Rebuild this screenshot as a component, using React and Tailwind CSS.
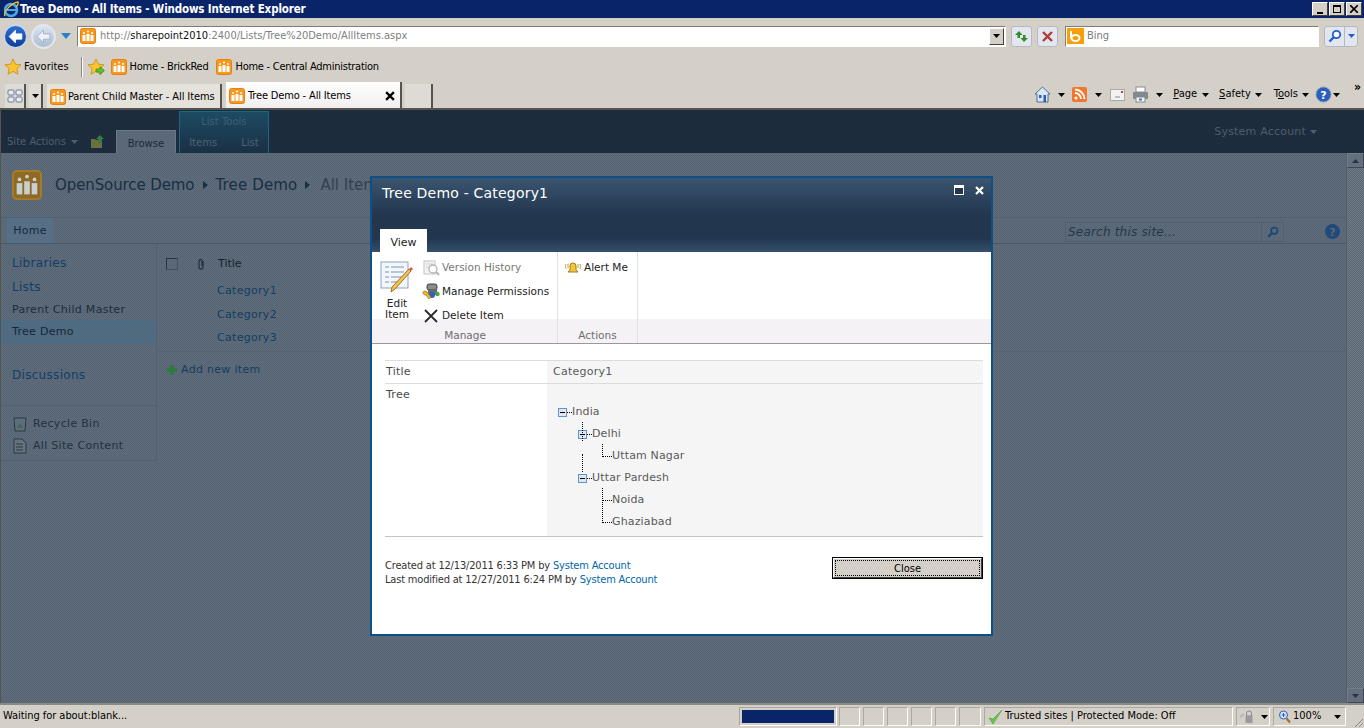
import React from "react";

const Sp = ({ s = 16, dim = false }) => (
  <svg width={s} height={s} viewBox="0 0 16 16" className="shrink-0">
    <rect x="0.5" y="0.5" width="15" height="15" rx="2" fill={dim ? "#8f6a25" : "#f59a1e"} stroke={dim ? "#a67c2c" : "#e87f10"} />
    <g fill={dim ? "#c9cfd0" : "#fff"}>
      <rect x="2.5" y="7" width="3" height="6" />
      <rect x="6.5" y="6" width="3" height="7" />
      <rect x="10.5" y="7" width="3" height="6" />
      <circle cx="4" cy="5" r="1" />
      <circle cx="8" cy="3.5" r="1" />
      <circle cx="12" cy="5" r="1" />
    </g>
  </svg>
);

const Caret = ({ c = "#000", className = "" }) => (
  <svg width="7" height="4" viewBox="0 0 7 4" className={"shrink-0 " + className}><path d="M0 0h7L3.500 4z" fill={c} /></svg>
);

const RightTri = ({ c, className = "" }) => (
  <svg width="5" height="8" viewBox="0 0 5 8" className={"shrink-0 " + className}><path d="M0 0l5 4-5 4z" fill={c} /></svg>
);

const Star = ({ green = false }) => (
  <svg width="18" height="18" viewBox="0 0 18 18" className="shrink-0">
    <path d="M9 1l2.400 5.200 5.600.6-4.200 3.800 1.200 5.600L9 13.400 4 16.200l1.200-5.600L1 6.800l5.600-.6z" fill="#fbc531" stroke="#c98a10" strokeWidth=".8" />
    {green && <path d="M9 11h4V8.500l4.500 4-4.500 4V14H9z" fill="#5fc12f" stroke="#2e8b12" strokeWidth=".7" />}
  </svg>
);

const NavBtn = ({ back }) => (
  <div className={"flex items-center justify-center rounded-full border-2 w-[25px] h-[25px] " + (back ? "border-[#c8d4e8] bg-gradient-to-b from-[#2f6fd0] to-[#0f3f98]" : "border-[#e2e6ee] bg-gradient-to-b from-[#dce4f0] to-[#aebcd2]")}>
    <svg width="17" height="15" viewBox="0 0 16 14"><path d="M8 1L2 7l6 6V9.500h6v-5H8z" fill={back ? "#fff" : "#eef2f8"} stroke={back ? "#fff" : "#8ea2c0"} strokeWidth=".7" /></svg>
  </div>
);

const SmallBtn = ({ children }) => (
  <div className="w-[21px] h-[21px] rounded-[3px] border border-[#b4b9c4] bg-[#e3e6ee] flex items-center justify-center">{children}</div>
);

const StatusCell = ({ className = "", children }) => (
  <div className={"h-[19px] border border-[#aaa8a0] border-b-white border-r-white flex items-center shrink-0 " + className}>{children}</div>
);

const Minus = () => (
  <span className="w-[9px] h-[9px] border border-[#5a96d0] bg-[#dfe6ee] flex items-center justify-center shrink-0">
    <span className="w-[5px] h-px bg-black" />
  </span>
);

const DotH = ({ w }) => <span className="border-t border-dotted border-black shrink-0" style={{ width: w }} />;

const V = ({ className }) => <span className={"absolute border-l border-dotted border-black " + className} />;

const TreeLabel = ({ children }) => <span className="text-[#5a5a5a] tracking-[0.15px]">{children}</span>;

const Win = ({ children }) => (
  <div className="w-[16px] h-[14px] bg-[#d4d0c8] border border-[#fff] border-r-[#404040] border-b-[#404040] flex items-center justify-center text-black">{children}</div>
);

export default function App() {
  return (
    <div className="w-[1364px] h-[728px] overflow-hidden bg-[#d4d0c8] relative flex flex-col font-['DejaVu_Sans_Condensed','DejaVu_Sans',sans-serif] text-[11px]">
      {/* title bar */}
      <div className="h-[18px] bg-[#0a246a] flex items-center pl-[3px] pr-[2px] shrink-0">
        <svg width="17" height="17" viewBox="0 0 17 17" className="shrink-0">
          <circle cx="8" cy="9" r="6" fill="none" stroke="#4aa8e8" strokeWidth="2.500" />
          <path d="M3 9h11" stroke="#4aa8e8" strokeWidth="2" />
          <path d="M2 15C0 11 8 2 15 1c1 2-1 4-2 5" fill="none" stroke="#f2c230" strokeWidth="1.300" />
        </svg>
        <span className="pt-px text-white font-bold text-[11.500px] tracking-[-0.15px]">Tree Demo - All Items - Windows Internet Explorer</span>
        <div className="ml-auto flex gap-px">
          <Win><span className="w-[6px] h-[2px] bg-black self-end mb-px" /></Win>
          <Win><span className="w-[8px] h-[8px] border border-black border-t-2" /></Win>
          <Win><svg width="8" height="8" viewBox="0 0 8 8"><path d="M0 0l8 8M8 0L0 8" stroke="#000" strokeWidth="1.600" /></svg></Win>
        </div>
      </div>

      {/* address bar */}
      <div className="h-[36px] flex items-center shrink-0 pl-[3px]">
        <NavBtn back />
        <div className="ml-[3px]"><NavBtn /></div>
        <svg width="10" height="6" viewBox="0 0 10 6" className="ml-[5px] mr-[6px] shrink-0"><path d="M0 0h10L5 6z" fill="#2a7fd0" /></svg>
        <div className="w-[929px] h-[21px] bg-white border border-[#7f7d76] border-r-white border-b-white flex items-center pl-[2px] shrink-0">
          <Sp />
          <span className="ml-[4px] text-[#808080] text-[11px]">http://<span className="text-[#111]">sharepoint2010</span>:2400/Lists/Tree%20Demo/AllItems.aspx</span>
          <div className="ml-auto w-[15px] h-[17px] bg-[#d4d0c8] border border-white border-r-[#404040] border-b-[#404040] flex items-center justify-center mr-px"><Caret /></div>
        </div>
        <div className="ml-[5px]"><SmallBtn><svg width="15" height="13" viewBox="0 0 15 13"><path d="M5 1L1 5h2.500v3H6V5h2.500zM10 12l4-4h-2.500V5H9v3H6.500z" fill="#2e8b2e" /></svg></SmallBtn></div>
        <div className="ml-[5px]"><SmallBtn><svg width="13" height="13" viewBox="0 0 13 13"><path d="M2 2l9 9M11 2l-9 9" stroke="#b03a3a" strokeWidth="2.400" /></svg></SmallBtn></div>
        <div className="ml-[7px] w-[254px] h-[21px] bg-white border border-[#7f7d76] border-r-white border-b-white flex items-center pl-px shrink-0">
          <span className="w-[17px] h-[16px] bg-[#f59f0a] flex items-center justify-center shrink-0">
            <svg width="13" height="13" viewBox="0 0 13 13"><path d="M2 1v7.500" stroke="#fff" strokeWidth="2" fill="none" /><ellipse cx="6.500" cy="8" rx="4" ry="3" fill="none" stroke="#fff" strokeWidth="2" /></svg>
          </span>
          <span className="ml-[3px] text-[#7a7a7a] text-[11px]">Bing</span>
        </div>
        <div className="ml-[5px] flex rounded-[3px] border border-[#b4b9c4] h-[21px] bg-[#e3e6ee]">
          <span className="w-[20px] flex items-center justify-center border-r border-[#b4b9c4]">
            <svg width="14" height="14" viewBox="0 0 14 14"><circle cx="8.500" cy="5.500" r="3.700" fill="#fff" stroke="#1f5fd0" strokeWidth="1.800" /><path d="M6 8l-4.500 4.500" stroke="#1f5fd0" strokeWidth="2.400" /></svg>
          </span>
          <span className="w-[12px] flex items-center justify-center"><Caret c="#1f5fd0" /></span>
        </div>
      </div>

      {/* favorites bar */}
      <div className="h-[26px] flex items-center shrink-0 pl-[4px] text-[11px] text-black">
        <Star />
        <span className="ml-[2px]">Favorites</span>
        <span className="ml-[12px] w-[2px] h-[20px] border-l border-[#8a8880] bg-white" />
        <span className="ml-[4px]"><Star green /></span>
        <span className="ml-[6px]"><Sp /></span>
        <span className="ml-[3px] tracking-[-0.25px]">Home - BrickRed</span>
        <span className="ml-[8px]"><Sp /></span>
        <span className="ml-[3px] tracking-[-0.25px]">Home - Central Administration</span>
      </div>

      {/* tab bar */}
      <div className="h-[28px] flex items-end shrink-0 pl-[5px] relative">
        <div className="h-[24px] w-[21px] border-r-2 border-[#55534e] bg-[#dedbd4] flex items-center justify-center">
          <svg width="16" height="14" viewBox="0 0 16 14" fill="#e8ecf4" stroke="#6b7c98"><rect x="1" y="1" width="6" height="5" rx="1" /><rect x="9" y="1" width="6" height="5" rx="1" /><rect x="1" y="8" width="6" height="5" rx="1" /><rect x="9" y="8" width="6" height="5" rx="1" /></svg>
        </div>
        <div className="ml-[3px] h-[24px] w-[14px] border-r-2 border-[#55534e] bg-[#dedbd4] flex items-center justify-center"><Caret /></div>
        <div className="ml-[4px] h-[24px] w-[175px] border-r-2 border-[#55534e] bg-[#e5e2db] flex items-center pl-[3px] pt-[2px] text-black">
          <Sp />
          <span className="ml-[2px] tracking-[-0.1px]">Parent Child Master - All Items</span>
        </div>
        <div className="ml-[4px] h-[26px] w-[176px] bg-gradient-to-b from-[#ffffff] to-[#f1eeee] border-r-2 border-[#55534e] flex items-center pl-[3px] pt-[2px] text-black">
          <Sp />
          <span className="ml-[3px] tracking-[-0.15px]">Tree Demo - All Items</span>
          <svg width="10" height="10" viewBox="0 0 9 9" className="ml-auto mr-[5px]"><path d="M1 1l7 7M8 1L1 8" stroke="#000" strokeWidth="2" /></svg>
        </div>
        <div className="ml-[3px] h-[24px] w-[28px] border-r-2 border-[#55534e] bg-[#dedbd4]" />
        <div className="ml-auto h-[28px] flex items-center pr-[24px] pt-px text-black">
          <svg width="17" height="17" viewBox="0 0 17 17"><path d="M8.500 1L1 8h2v8h11V8h2z" fill="#dbe6f4" stroke="#4c6f9e" /><rect x="5" y="9" width="2.500" height="3" fill="#2f5fa8" /><rect x="9.500" y="9" width="2.500" height="7" fill="#2f5fa8" /></svg>
          <Caret className="ml-[7px]" />
          <svg width="15" height="15" viewBox="0 0 15 15" className="ml-[7px]"><rect width="15" height="15" rx="2" fill="#f0772b" /><circle cx="4" cy="11" r="1.500" fill="#fff" /><path d="M3 6a6 6 0 016 6M3 2.500A9.500 9.500 0 0112.500 12" fill="none" stroke="#fff" strokeWidth="1.800" /></svg>
          <Caret className="ml-[8px]" />
          <svg width="15" height="12" viewBox="0 0 15 12" className="ml-[8px]"><rect x=".5" y=".5" width="14" height="11" fill="#f2f2f2" stroke="#a9a9a9" /><rect x="11" y="2" width="2" height="2" fill="#d33" /><path d="M5 8h5" stroke="#888" /></svg>
          <svg width="17" height="17" viewBox="0 0 17 17" className="ml-[7px]"><rect x="4" y="1" width="9" height="5" fill="#fff" stroke="#8a8a8a" /><rect x="1" y="6" width="15" height="7" rx="1" fill="#808890" /><rect x="4" y="11" width="9" height="5" fill="#f4f4f4" stroke="#8a8a8a" /><rect x="7" y="12.500" width="3" height="2" fill="#3a7fc0" /></svg>
          <Caret className="ml-[7px]" />
          <span className="ml-[10px]"><u>P</u>age</span>
          <Caret className="ml-[5px]" />
          <span className="ml-[10px]"><u>S</u>afety</span>
          <Caret className="ml-[4px]" />
          <span className="ml-[12px]">T<u>o</u>ols</span>
          <Caret className="ml-[4px]" />
          <svg width="17" height="17" viewBox="0 0 17 17" className="ml-[6px]"><circle cx="8.500" cy="8.500" r="7.500" fill="#2a5fc0" stroke="#8a9ab0" /><text x="8.500" y="12.500" fontSize="11" fontWeight="bold" fill="#fff" textAnchor="middle" fontFamily="DejaVu Sans">?</text></svg>
          <Caret className="ml-[1px]" />
        </div>
        <span className="absolute right-[3px] top-[1px] text-[12px] font-bold leading-none text-black">»</span>
      </div>

      {/* page (dimmed) */}
      <div className="flex-1 min-h-0 flex flex-col border-t-2 border-l border-[#55534e] bg-[repeating-conic-gradient(#566473_0%_25%,#5f6c7b_0%_50%)] bg-[length:2px_2px] font-['DejaVu_Sans',sans-serif]">
        {/* SP ribbon */}
        <div className="h-[43px] bg-[repeating-conic-gradient(#19293b_0%_25%,#203040_0%_50%)] bg-[length:2px_2px] flex items-end relative shrink-0">
          <span className="text-[#4f5e6e] text-[10px] ml-[6px] mb-[4px]">Site Actions</span>
          <Caret c="#4f5e6e" className="ml-[5px] mb-[9px]" />
          <svg width="16" height="15" viewBox="0 0 16 15" className="ml-[12px] mb-[4px]"><path d="M1 5h4l1 1h6v8H1z" fill="#6b7040" /><path d="M10 1l4 4h-2v4H8V5H6z" fill="#3d7a3d" /></svg>
          <div className="ml-[10px] w-[60px] h-[23px] bg-[#5a6878] border-t border-x border-[#6b7887] text-center leading-[26px] text-[#1d2a38] text-[10px]">Browse</div>
          <div className="ml-[3px] w-[90px] h-[42px] border-x border-t border-[#1d6680] bg-gradient-to-b from-[#1c4b63] to-[#1a3045] flex flex-col items-center">
            <span className="text-[#3f5f73] text-[10px] mt-[2px]">List Tools</span>
            <div className="mt-[6px] flex gap-[24px] text-[#4f6272] text-[10px]"><span>Items</span><span>List</span></div>
          </div>
          <span className="ml-auto mr-[58px] mb-[13px] text-[#4f5e6e] text-[11px] tracking-[0.2px]">System Account</span>
          <Caret c="#4f5e6e" className="absolute right-[47px] top-[20px]" />
        </div>

        <div className="flex-1 min-h-0 flex">
          <div className="flex-1 min-w-0 flex flex-col">
            {/* site title */}
            <div className="h-[65px] flex items-center shrink-0 pl-[11px] border-b border-[#525f6e]">
              <span className="rounded-[3px] overflow-hidden"><Sp s={30} dim /></span>
              <span className="ml-[13px] text-[15px] text-[#182f44] tracking-[-0.1px]">OpenSource Demo</span>
              <RightTri c="#182f44" className="ml-[9px]" />
              <span className="ml-[7px] text-[15px] text-[#182f44] tracking-[0.15px]">Tree Demo</span>
              <RightTri c="#182f44" className="ml-[8px]" />
              <span className="ml-[10px] text-[15px] text-[#33414f]">All Items</span>
            </div>

            {/* top nav */}
            <div className="h-[26px] flex items-stretch shrink-0 pl-[6px] border-b border-[#4c5866] relative">
              <div className="w-[46px] border border-[#4d7390] bg-[#566f85] text-[#16293b] text-[11px] pt-[2px] flex items-center justify-center tracking-[0.3px]">Home</div>
              <div className="ml-auto flex items-center pr-[6px] pt-[2px]">
                <div className="w-[197px] h-[20px] border border-[#525f6e] flex items-center pl-[2px] text-[#24384c] text-[12px] italic tracking-[0.2px]">Search this site...</div>
                <div className="w-[22px] h-[20px] border border-l-0 border-[#525f6e] flex items-center justify-center">
                  <svg width="12" height="12" viewBox="0 0 14 14"><circle cx="8.500" cy="5.500" r="3.700" fill="none" stroke="#184a78" strokeWidth="2" /><path d="M6 8l-4.500 4.500" stroke="#184a78" strokeWidth="2.600" /></svg>
                </div>
                <svg width="15" height="15" viewBox="0 0 15 15" className="ml-[41px]"><circle cx="7.500" cy="7.500" r="7.500" fill="#204a7c" /><text x="7.500" y="11.500" fontSize="11" fontWeight="bold" fill="#5a6878" textAnchor="middle" fontFamily="DejaVu Sans">?</text></svg>
              </div>
            </div>

            {/* body */}
            <div className="flex-1 min-h-0 flex items-start">
              <div className="w-[156px] h-[217px] border-r border-b border-[#525f6e] shrink-0 text-[#1e2c3a]">
                <div className="h-[11px]" />
                <div className="pl-[11px] text-[12px] text-[#123f66] leading-[16px] tracking-[0.3px]">Libraries</div>
                <div className="pl-[11px] mt-[8px] text-[12px] text-[#123f66] leading-[16px] tracking-[0.3px]">Lists</div>
                <div className="pl-[11px] mt-[7px] text-[11px] leading-[16px] tracking-[0.3px]">Parent Child Master</div>
                <div className="mt-[3px] h-[22px] flex items-center pl-[10px] border border-[#456f92] bg-[#506a80] text-[11px] tracking-[0.3px] text-[#14283a]">Tree Demo</div>
                <div className="pl-[11px] mt-[24px] text-[12px] text-[#123f66] leading-[16px] tracking-[0.3px]">Discussions</div>
                <div className="mt-[22px] border-t border-[#525f6e] pl-[12px] pt-[10px] flex flex-col gap-[6px] text-[11px] tracking-[0.3px] text-[#25323f]">
                  <div className="flex items-center h-[16px]">
                    <svg width="14" height="16" viewBox="0 0 14 16"><path d="M1 2h12l-1 13H2z" fill="#5f6d7c" stroke="#2b3947" /><path d="M7 7l3 5H4z" fill="#3d6a4a" /></svg>
                    <span className="ml-[6px]">Recycle Bin</span>
                  </div>
                  <div className="flex items-center h-[16px]">
                    <svg width="14" height="16" viewBox="0 0 14 16"><path d="M1 1h8l4 4v10H1z" fill="#66737f" stroke="#2b3947" /><path d="M3 6h7M3 9h7M3 12h7" stroke="#2b3947" /></svg>
                    <span className="ml-[6px]">All Site Content</span>
                  </div>
                </div>
              </div>
              <div className="flex-1">
                <div className="h-[108px] pl-[9px] border-b border-[#566372]">
                  <div className="h-[40px] flex items-center">
                    <span className="w-[12px] h-[12px] border border-[#2a3644] border-b-[#44515f] border-r-[#44515f]" />
                    <svg width="10" height="12" viewBox="0 0 10 12" className="ml-[18px]"><path d="M7 3v6a2 2 0 01-4 0V3a1.500 1.500 0 013 0v5" fill="none" stroke="#26333f" strokeWidth="1.300" /></svg>
                    <span className="ml-[12px] text-[#16232f] text-[11px]">Title</span>
                  </div>
                  <div className="pl-[51px] -mt-[5px] text-[11px] text-[#133e62] tracking-[0.3px]">
                    <div className="h-[24px] flex items-center">Category1</div>
                    <div className="h-[24px] flex items-center">Category2</div>
                    <div className="h-[23px] flex items-center">Category3</div>
                  </div>
                </div>
                <div className="pl-[10px] mt-[10px] flex items-center text-[#133e62] text-[11px] tracking-[0.3px]">
                  <svg width="10" height="10" viewBox="0 0 10 10"><path d="M3 0h4v3h3v4H7v3H3V7H0V3h3z" fill="#2f7a3e" /></svg>
                  <span className="ml-[4px]">Add new item</span>
                </div>
              </div>
            </div>
          </div>
          {/* scrollbar */}
          <div className="w-[18px] bg-[repeating-conic-gradient(#5b6673_0%_25%,#707c88_0%_50%)] bg-[length:2px_2px] flex flex-col border-l border-[#525f6e]">
            <div className="h-[15px] bg-[#636f7c] border border-[#727e8a] border-r-[#3d4753] border-b-[#3d4753] flex items-center justify-center">
              <Caret c="#2a3440" className="rotate-180" />
            </div>
            <div className="mt-auto w-full h-[15px] bg-[#636f7c] border border-[#727e8a] border-r-[#3d4753] border-b-[#3d4753] flex items-center justify-center">
              <Caret c="#2a3440" />
            </div>
          </div>
        </div>
      </div>

      {/* status bar */}
      <div className="h-[25px] shrink-0 flex items-center border-t-2 border-[#8c8a84] bg-[#d4d0c8] pl-[3px] text-[11px] text-black relative">
        <span className="w-[736px] shrink-0 tracking-[-0.05px]">Waiting for about:blank...</span>
        <StatusCell className="w-[98px] p-[2px]"><span className="w-full h-full bg-[#0a246a]" /></StatusCell>
        <StatusCell className="w-[21px] ml-[2px]" />
        <StatusCell className="w-[21px] ml-[3px]" />
        <StatusCell className="w-[21px] ml-[3px]" />
        <StatusCell className="w-[21px] ml-[3px]" />
        <StatusCell className="w-[21px] ml-[3px]" />
        <StatusCell className="w-[22px] ml-[3px]" />
        <StatusCell className="w-[249px] ml-[3px] pl-[1px]">
          <svg width="18" height="16" viewBox="0 0 16 16"><path d="M2 9l4 6L15 1 6 10z" fill="#62c94a" stroke="#3b9a2a" strokeWidth=".5" /></svg>
          <span className="ml-[1px] whitespace-nowrap">Trusted sites | Protected Mode: Off</span>
        </StatusCell>
        <StatusCell className="w-[34px] ml-[3px] pl-[2px]">
          <svg width="16" height="14" viewBox="0 0 16 14"><path d="M1 7l4-3" stroke="#b4b4b4" strokeWidth="2" /><path d="M10 1a2.500 2.500 0 012.500 2.500V6h-5V3.500A2.500 2.500 0 0110 1z" fill="none" stroke="#888" /><rect x="6.500" y="6" width="7" height="7" fill="#9a9a9a" /></svg>
          <Caret className="ml-[6px]" />
        </StatusCell>
        <StatusCell className="w-[73px] ml-[3px] pl-[4px]">
          <svg width="13" height="14" viewBox="0 0 13 14"><circle cx="5.500" cy="5" r="4" fill="#d8e6f8" stroke="#2a5fc0" /><path d="M3.500 5h4M5.500 3v4" stroke="#2a5fc0" /><path d="M8.500 8.500l3.500 4" stroke="#a56a2a" strokeWidth="2" /></svg>
          <span className="ml-[2px]">100%</span>
          <Caret className="ml-auto mr-[4px]" />
        </StatusCell>
        <svg width="12" height="12" viewBox="0 0 12 12" className="absolute right-0 bottom-0"><path d="M11 3l-8 8M11 7l-4 4" stroke="#8a8880" /></svg>
      </div>

      {/* modal */}
      <div className="absolute left-[370px] top-[176px] w-[623px] h-[460px] border-2 border-[#0f4f86] bg-white flex flex-col font-['DejaVu_Sans',sans-serif]">
        <div className="h-[74px] shrink-0 bg-gradient-to-b from-[#3b5570] via-[#22364e] to-[#22364e] relative">
          <div className="absolute bottom-0 inset-x-0 h-[14px] bg-gradient-to-b from-[#22364e] to-[#34506b]" />
          <span className="absolute left-[10px] top-[5px] text-white text-[14px] tracking-[0.2px]">Tree Demo - Category1</span>
          <span className="absolute left-[582px] top-[7px] w-[10px] h-[10px] border border-white border-t-[3px] bg-[#22364e]" />
          <svg width="9" height="9" viewBox="0 0 9 9" className="absolute left-[603px] top-[8px]"><path d="M1 1l7 7M8 1L1 8" stroke="#fff" strokeWidth="2.200" /></svg>
          <div className="absolute left-[8px] bottom-0 w-[47px] h-[23px] pt-[5px] bg-white text-[#222] text-[11px] flex items-center justify-center">View</div>
        </div>
        <div className="h-[92px] shrink-0 border-b border-[#9a9a9a] flex relative bg-gradient-to-b from-white from-74% to-[#f4f2f5] to-74%">
          <div className="w-[186px] border-r border-[#dfe2e6] relative">
            <div className="absolute left-[0px] top-[9px] w-[50px] flex flex-col items-center text-[#222] text-[10.500px] leading-[10px]">
              <svg width="34" height="32" viewBox="0 0 34 32" className="mb-[5px]">
                <rect x="1" y="1" width="27" height="26" fill="#f3f6fb" stroke="#8aa3c6" />
                <path d="M5 6h4M11 6h13M5 11h4M11 11h13M5 16h4M11 16h13M5 21h4M11 21h9" stroke="#7a94b8" />
                <path d="M31 10L15 28l-4 3 1-5L29 8z" fill="#f3c44a" stroke="#a3701f" />
                <path d="M29 8l2 2 2-2-2-2z" fill="#d85a5a" />
              </svg>
              <span>Edit</span>
              <span className="mt-px">Item</span>
            </div>
            <div className="absolute left-[50px] top-[4px] text-[10.500px] text-[#222]">
              <div className="h-[24px] flex items-center text-[#777]">
                <svg width="18" height="18" viewBox="0 0 18 18"><rect x="2" y="2" width="11" height="13" fill="#f2f2f2" stroke="#c4c4c4" /><path d="M4 5h7M4 8h4" stroke="#d0d0d0" /><circle cx="11" cy="10" r="4" fill="#fff" stroke="#b4b4b4" strokeWidth="1.300" /><path d="M14 13l3 3" stroke="#b4b4b4" strokeWidth="2" /></svg>
                <span className="ml-[2px]">Version History</span>
              </div>
              <div className="h-[24px] flex items-center">
                <svg width="18" height="18" viewBox="0 0 18 18"><rect x="5" y="1" width="10" height="6" rx="2" fill="#8a8a8a" stroke="#444" /><rect x="6" y="7" width="9" height="5" fill="#6a6a6a" /><circle cx="10" cy="12" r="3" fill="#2a62c4" /><path d="M1 9a2.500 2.500 0 014 0l4 5-2 2-3-4a2.500 2.500 0 01-3-3z" fill="#e8b52c" stroke="#8a6a10" strokeWidth=".6" /><circle cx="15.500" cy="11" r="2.200" fill="#4aa84a" /></svg>
                <span className="ml-[2px]">Manage Permissions</span>
              </div>
              <div className="h-[24px] flex items-center">
                <svg width="18" height="18" viewBox="0 0 18 18"><path d="M3 3l12 12M15 3L3 15" stroke="#2b2b2b" strokeWidth="1.800" /></svg>
                <span className="ml-[2px]">Delete Item</span>
              </div>
            </div>
            <span className="absolute left-[0px] w-full text-center bottom-[1px] text-[#6e6e6e] text-[10.500px] leading-[13px] pl-[1px]">Manage</span>
          </div>
          <div className="w-[80px] border-r border-[#dfe2e6] relative text-[10.500px]">
            <div className="h-[24px] mt-[4px] flex items-center pl-[7px] text-[#222]">
              <svg width="16" height="14" viewBox="0 0 16 14"><path d="M8 2a3 3 0 013 3v4l2 2H3l2-2V5a3 3 0 013-3z" fill="#f2c53d" stroke="#a37a1a" /><path d="M1 3c-.7 2-.7 3 0 5M15 3c.7 2 .7 3 0 5M3 3v4M13 3v4" stroke="#c49a2a" fill="none" /></svg>
              <span className="ml-[3px]">Alert Me</span>
            </div>
            <span className="absolute w-full text-center bottom-[1px] leading-[13px] text-[#6e6e6e]">Actions</span>
          </div>
        </div>
        <div className="flex-1 pl-[13px] pr-[8px] text-[11px] text-[#4a4a4a] tracking-[0.25px]">
          <div className="mt-[16px] border-t border-[#dcdcdc] flex h-[24px] border-b">
            <div className="w-[162px] pt-[3px] pl-px">Title</div>
            <div className="flex-1 bg-[#f5f5f5] pt-[3px] pl-[6px] text-[#5a5a5a]">Category1</div>
          </div>
          <div className="flex h-[153px] border-b border-[#c4c4c4]">
            <div className="w-[162px] pt-[3px] pl-px">Tree</div>
            <div className="flex-1 bg-[#f5f5f5] relative pt-[17px] pl-[11px] text-[11px] leading-[22px]">
              <div className="flex items-center h-[22px]"><Minus /><DotH w="5px" /><TreeLabel>India</TreeLabel></div>
              <div className="flex items-center h-[22px] pl-[20px]"><Minus /><DotH w="5px" /><TreeLabel>Delhi</TreeLabel></div>
              <div className="flex items-center h-[22px] pl-[44px]"><DotH w="10px" /><TreeLabel>Uttam Nagar</TreeLabel></div>
              <div className="flex items-center h-[22px] pl-[20px]"><Minus /><DotH w="5px" /><TreeLabel>Uttar Pardesh</TreeLabel></div>
              <div className="flex items-center h-[22px] pl-[44px]"><DotH w="10px" /><TreeLabel>Noida</TreeLabel></div>
              <div className="flex items-center h-[22px] pl-[44px]"><DotH w="10px" /><TreeLabel>Ghaziabad</TreeLabel></div>
              <V className="left-[35px] top-[38px] h-[19px]" />
              <V className="left-[35px] top-[70px] h-[18px]" />
              <V className="left-[55px] top-[60px] h-[11px]" />
              <V className="left-[55px] top-[104px] h-[33px]" />
            </div>
          </div>
          <div className="mt-[22px] flex font-['DejaVu_Sans_Condensed','DejaVu_Sans',sans-serif] text-[#333] tracking-normal leading-[14px]">
            <div className="tracking-[-0.18px]">
              <div>Created at 12/13/2011 6:33 PM by <span className="text-[#0066a8]">System Account</span></div>
              <div>Last modified at 12/27/2011 6:24 PM by <span className="text-[#0066a8]">System Account</span></div>
            </div>
            <div className="ml-auto -mt-[2px] w-[151px] h-[22px] border border-black flex">
              <div className="flex-1 bg-[#d4d0c8] border border-white border-r-[#404040] border-b-[#404040] p-px flex">
                <div className="flex-1 border border-dotted border-black pt-px flex items-center justify-center text-black">Close</div>
              </div>
            </div>
          </div>
        </div>
      </div>
    </div>
  );
}
